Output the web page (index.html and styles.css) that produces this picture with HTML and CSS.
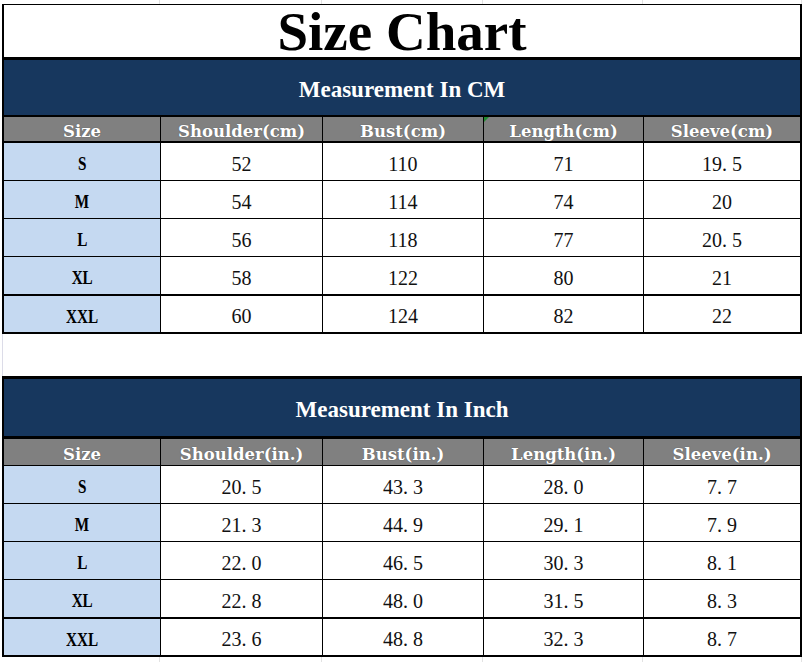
FILE: index.html
```html
<!DOCTYPE html>
<html lang="en">
<head>
<meta charset="utf-8">
<title>Size Chart</title>
<link rel="stylesheet" href="styles.css">
</head>
<body>
<div class="sheet">
  <div class="gridstrip"><span></span><span></span><span></span><span></span><span></span></div>
  <div class="title">Size Chart</div>

  <section class="chart chart-cm">
    <div class="band">Measurement In CM</div>
    <div class="table">
      <div class="th">Size</div><div class="th">Shoulder(cm)</div><div class="th">Bust(cm)</div><div class="th th-mark">Length(cm)</div><div class="th">Sleeve(cm)</div>
      <div class="sz"><span>S</span></div><div class="td">52</div><div class="td">110</div><div class="td">71</div><div class="td">19<span class="dot">.</span>5</div>
      <div class="sz"><span>M</span></div><div class="td">54</div><div class="td">114</div><div class="td">74</div><div class="td">20</div>
      <div class="sz"><span>L</span></div><div class="td">56</div><div class="td">118</div><div class="td">77</div><div class="td">20<span class="dot">.</span>5</div>
      <div class="sz"><span>XL</span></div><div class="td">58</div><div class="td">122</div><div class="td">80</div><div class="td">21</div>
      <div class="sz last"><span>XXL</span></div><div class="td last">60</div><div class="td last">124</div><div class="td last">82</div><div class="td last">22</div>
    </div>
  </section>

  <div class="gap"></div>

  <section class="chart chart-in">
    <div class="band">Measurement In Inch</div>
    <div class="table">
      <div class="th">Size</div><div class="th">Shoulder(in.)</div><div class="th">Bust(in.)</div><div class="th">Length(in.)</div><div class="th">Sleeve(in.)</div>
      <div class="sz"><span>S</span></div><div class="td">20<span class="dot">.</span>5</div><div class="td">43<span class="dot">.</span>3</div><div class="td">28<span class="dot">.</span>0</div><div class="td">7<span class="dot">.</span>7</div>
      <div class="sz"><span>M</span></div><div class="td">21<span class="dot">.</span>3</div><div class="td">44<span class="dot">.</span>9</div><div class="td">29<span class="dot">.</span>1</div><div class="td">7<span class="dot">.</span>9</div>
      <div class="sz"><span>L</span></div><div class="td">22<span class="dot">.</span>0</div><div class="td">46<span class="dot">.</span>5</div><div class="td">30<span class="dot">.</span>3</div><div class="td">8<span class="dot">.</span>1</div>
      <div class="sz"><span>XL</span></div><div class="td">22<span class="dot">.</span>8</div><div class="td">48<span class="dot">.</span>0</div><div class="td">31<span class="dot">.</span>5</div><div class="td">8<span class="dot">.</span>3</div>
      <div class="sz last"><span>XXL</span></div><div class="td last">23<span class="dot">.</span>6</div><div class="td last">48<span class="dot">.</span>8</div><div class="td last">32<span class="dot">.</span>3</div><div class="td last">8<span class="dot">.</span>7</div>
    </div>
  </section>

  <div class="gridstrip bottom"><span></span><span></span><span></span><span></span><span></span></div>
</div>
</body>
</html>
```

FILE: styles.css
```css
html, body {
  margin: 0;
  padding: 0;
  background: #ffffff;
}

.sheet {
  width: 800px;
  margin-left: 2px;
  display: flex;
  flex-direction: column;
}

.gridstrip {
  height: 4px;
  display: grid;
  grid-template-columns: 158px 162px 161px 160px 159px;
}
.gridstrip span {
  border-right: 1px solid #e2e2e2;
}
.gridstrip.bottom {
  height: 5px;
}

.title {
  height: 52px;
  border: 2px solid #000;
  border-top-width: 1px;
  border-bottom: none;
  display: flex;
  align-items: center;
  justify-content: center;
  font-family: "Liberation Serif", "Times New Roman", serif;
  font-weight: bold;
  font-size: 55px;
  color: #000;
  line-height: 1;
}

.chart {
  border: 2px solid #000;
  border-top-width: 3px;
  display: flex;
  flex-direction: column;
}

.band {
  background: #17375e;
  color: #ffffff;
  font-family: "Liberation Serif", "Times New Roman", serif;
  font-weight: bold;
  font-size: 23px;
  display: flex;
  align-items: center;
  justify-content: center;
  padding-top: 4px;
  box-sizing: border-box;
  border-bottom: 2px solid #000;
}
.chart-cm .band { height: 57px; }
.chart-in .band { height: 60px; border-bottom-width: 3px; }

.table {
  display: grid;
  grid-template-columns: 156px 161px 160px 159px 156px;
  grid-auto-rows: 37px;
  gap: 1px;
  background: #000;
}
.chart-cm .table { grid-template-rows: 25px; }
.chart-in .table { grid-template-rows: 26px; }

.th {
  background: #808080;
  color: #ffffff;
  font-family: "DejaVu Serif", serif;
  font-weight: bold;
  font-size: 16.5px;
  display: flex;
  align-items: center;
  justify-content: center;
  margin-bottom: 1px;
  padding-top: 5px;
  box-sizing: border-box;
  text-shadow: 0 0 1px rgba(40, 40, 40, 0.6);
  position: relative;
}
.chart-in .th { margin-bottom: 0; }

.th-mark::before {
  content: "";
  position: absolute;
  left: 0;
  top: 0;
  width: 0;
  height: 0;
  border-top: 5px solid #1e8a2e;
  border-right: 5px solid transparent;
}

.sz {
  background: #c5d9f1;
  display: flex;
  align-items: center;
  justify-content: center;
  font-family: "Liberation Serif", "Times New Roman", serif;
  font-weight: bold;
  font-size: 19px;
  color: #000;
  padding-top: 5px;
  box-sizing: border-box;
}
.sz span {
  display: inline-block;
  transform: scaleX(0.8);
}

.td {
  background: #ffffff;
  display: flex;
  align-items: center;
  justify-content: center;
  font-family: "Liberation Serif", "Times New Roman", serif;
  font-size: 20px;
  color: #111;
  padding-top: 5px;
  box-sizing: border-box;
}

.dot {
  margin-right: 5px;
}

.last {
  margin-top: 1px;
}

.gap {
  height: 42px;
  border-left: 1px solid #dcdce8;
}
```
